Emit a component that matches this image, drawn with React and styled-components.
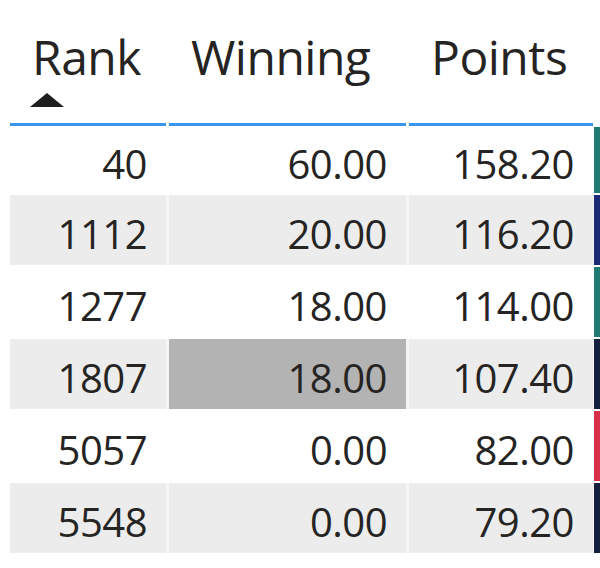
import React from "react";
import styled, { createGlobalStyle } from "styled-components";

const GlobalStyle = createGlobalStyle`
  html, body {
    margin: 0;
    padding: 0;
    background: #ffffff;
  }
  body {
    font-family: "Open Sans", "Noto Sans", "Liberation Sans", sans-serif;
    color: #252423;
  }
`;

const COLUMNS = ["Rank", "Winning", "Points"];

const ROWS = [
  { rank: "40", winning: "60.00", points: "158.20", color: "#1f7a74" },
  { rank: "1112", winning: "20.00", points: "116.20", color: "#1c2a78" },
  { rank: "1277", winning: "18.00", points: "114.00", color: "#1f7a74" },
  { rank: "1807", winning: "18.00", points: "107.40", color: "#15203f", selected: true },
  { rank: "5057", winning: "0.00", points: "82.00", color: "#d8304b" },
  { rank: "5548", winning: "0.00", points: "79.20", color: "#15203f" },
];

export default function App() {
  return (
    <Page>
      <GlobalStyle />
      <Table>
        <HeaderRow>
          {COLUMNS.map((col, i) => (
            <HeaderCell key={col}>
              <HeaderText>{col}</HeaderText>
              {i === 0 && (
                <SortArrow viewBox="0 0 34 14">
                  <path d="M17 0 L34 14 L0 14 Z" fill="#1e1e1e" />
                </SortArrow>
              )}
            </HeaderCell>
          ))}
          <span />
        </HeaderRow>
        {ROWS.map((row, i) => (
          <Row key={row.rank} $striped={i % 2 === 1}>
            <Cell $striped={i % 2 === 1}>{row.rank}</Cell>
            <Cell $striped={i % 2 === 1} $selected={row.selected}>
              {row.winning}
            </Cell>
            <Cell $striped={i % 2 === 1}>{row.points}</Cell>
            <Strip $color={row.color} />
          </Row>
        ))}
      </Table>
    </Page>
  );
}

const Page = styled.div`
  width: 600px;
  height: 568px;
  overflow: hidden;
  padding-left: 10px;
  box-sizing: border-box;
`;

const Table = styled.div`
  display: flex;
  flex-direction: column;
`;

const grid = `
  display: grid;
  grid-template-columns: 156px 237px 184px 7px;
  column-gap: 3px;
`;

const HeaderRow = styled.div`
  ${grid}
  margin-bottom: 1px;
`;

const HeaderCell = styled.div`
  height: 126px;
  box-sizing: border-box;
  padding: 33px 0 0 22px;
  border-bottom: 3px solid #3a95ec;
  display: flex;
  flex-direction: column;
`;

const HeaderText = styled.div`
  font-size: 48px;
  line-height: 1;
  letter-spacing: -0.5px;
`;

const SortArrow = styled.svg`
  width: 34px;
  height: 14px;
  margin-top: 12px;
  margin-left: -2px;
`;

const Row = styled.div`
  ${grid}
  height: 70px;
  margin-bottom: 2px;
  background: ${(p) => (p.$striped ? "#f5f5f5" : "#ffffff")};

  &:nth-child(2) {
    height: 66px;
  }
`;

const Cell = styled.div`
  display: flex;
  align-items: center;
  justify-content: flex-end;
  padding: 6px 19px 0 0;
  font-size: 40px;
  letter-spacing: -0.5px;
  background: ${(p) =>
    p.$selected ? "#b3b3b3" : p.$striped ? "#ececec" : "#ffffff"};
`;

const Strip = styled.div`
  margin-left: -2px;
  background: ${(p) => p.$color};
`;
